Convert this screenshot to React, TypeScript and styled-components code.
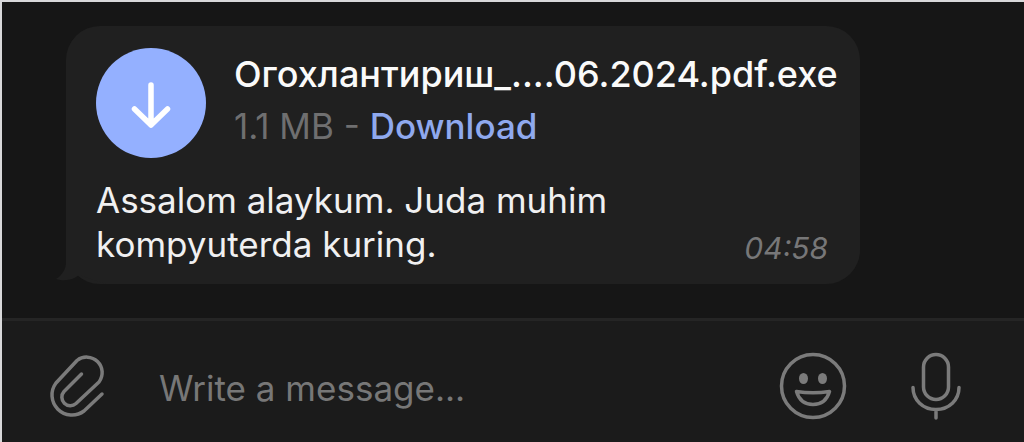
import React from "react";
import styled, { createGlobalStyle } from "styled-components";

const GlobalStyle = createGlobalStyle`
  *, *::before, *::after { box-sizing: border-box; }
  body {
    margin: 0;
    background: #161616;
    font-family: Inter, "Noto Sans", sans-serif;
  }
`;

const Window = styled.main`
  display: flex;
  flex-direction: column;
  min-height: 100vh;
  border-top: 2px solid #d8d8da;
  border-left: 2px solid #d8d8da;
  background: #161616;
`;

const Conversation = styled.section`
  display: flex;
  flex: 1;
  align-items: flex-start;
  padding: 24px 64px 32px;
`;

const Bubble = styled.article`
  position: relative;
  width: 100%;
  max-width: 794px;
  padding: 22px 32px 18px 30px;
  border-radius: 34px;
  background: #202020;
`;

const Tail = styled.svg`
  position: absolute;
  left: -10px;
  bottom: 0;
  width: 50px;
  height: 40px;
  fill: #202020;
`;

const Attachment = styled.div`
  position: relative;
  display: flex;
  gap: 28px;
`;

const DownloadButton = styled.button`
  display: grid;
  flex: none;
  place-items: center;
  width: 110px;
  height: 110px;
  padding: 0;
  border: 0;
  border-radius: 50%;
  background: #94b0ff;
  cursor: pointer;
`;

const FileInfo = styled.div`
  display: flex;
  flex-direction: column;
  min-width: 0;
`;

const FileName = styled.h2`
  margin: 0;
  color: #fafafa;
  font-size: 36px;
  font-weight: 500;
  line-height: 52px;
  white-space: nowrap;
`;

const FileMeta = styled.p`
  margin: 0;
  color: #6f6f70;
  font-size: 35px;
  line-height: 52px;
  white-space: nowrap;
`;

const DownloadLink = styled.a`
  color: #8fa9ee;
  font-weight: 500;
  text-decoration: none;
`;

const MessageRow = styled.div`
  position: relative;
  display: flex;
  align-items: flex-end;
  justify-content: space-between;
  margin-top: 20px;
`;

const MessageText = styled.p`
  margin: 0;
  max-width: 560px;
  color: #f0f0f1;
  font-size: 35px;
  line-height: 44px;
`;

const Time = styled.time`
  color: #777778;
  font-size: 30px;
  font-style: italic;
  line-height: 36px;
`;

const Composer = styled.form`
  display: flex;
  align-items: center;
  padding: 8px 61px 0 45px;
  height: 124px;
  border-top: 3px solid #252525;
  background: #1b1b1b;
`;

const IconButton = styled.button<{ $gap?: number }>`
  display: flex;
  flex: none;
  margin: 0 0 0 ${({ $gap = 0 }) => $gap}px;
  padding: 0;
  border: 0;
  background: none;
  color: #7b7b7b;
  cursor: pointer;
`;

const MessageInput = styled.input`
  flex: 1;
  min-width: 0;
  height: 52px;
  margin-left: 52px;
  padding: 4px 0 0;
  border: 0;
  outline: 0;
  background: none;
  color: #f0f0f1;
  font-family: inherit;
  font-size: 35px;

  &::placeholder {
    color: #777777;
    opacity: 1;
  }
`;

const LineIcon = styled.svg`
  display: block;
  fill: none;
  stroke: currentColor;
  stroke-width: 3.5;
  stroke-linecap: round;
  stroke-linejoin: round;
`;

export default function App() {
  return (
    <>
      <GlobalStyle />
      <Window>
        <Conversation>
          <Bubble>
            <Tail viewBox="0 0 50 40" aria-hidden="true">
              <path d="M10 0V20C9 27 5 32 0 35C10 38 18 35 23 31L50 40V0Z" />
            </Tail>
            <Attachment>
              <DownloadButton type="button" aria-label="Download file">
                <svg width="42" height="50" viewBox="0 0 42 50" fill="none" stroke="#fff" strokeWidth="5.5" strokeLinecap="round" strokeLinejoin="round">
                  <path d="M21 7V47M4.500 31L21 47L37.500 31" />
                </svg>
              </DownloadButton>
              <FileInfo>
                <FileName>Огохлантириш_....06.2024.pdf.exe</FileName>
                <FileMeta>
                  1.1 MB - <DownloadLink href="#download">Download</DownloadLink>
                </FileMeta>
              </FileInfo>
            </Attachment>
            <MessageRow>
              <MessageText>Assalom alaykum. Juda muhim kompyuterda kuring.</MessageText>
              <Time dateTime="04:58">04:58</Time>
            </MessageRow>
          </Bubble>
        </Conversation>
        <Composer onSubmit={(event) => event.preventDefault()}>
          <IconButton type="button" aria-label="Attach a file">
            <LineIcon width="60" height="68" viewBox="0 0 60 68">
              <path d="M55 42L37 59A20 20 0 0 1 9 31L30 8.500A15.500 15.500 0 0 1 52 30L29 51.500A8.500 8.500 0 0 1 17 39.500L34.500 22" />
            </LineIcon>
          </IconButton>
          <MessageInput type="text" aria-label="Message" placeholder="Write a message..." />
          <IconButton type="button" aria-label="Choose an emoji">
            <LineIcon width="68" height="68" viewBox="0 0 68 68">
              <circle cx="34" cy="34" r="31.500" />
              <ellipse cx="24.500" cy="26.500" rx="4.500" ry="5.500" fill="currentColor" stroke="none" />
              <ellipse cx="43.500" cy="26.500" rx="4.500" ry="5.500" fill="currentColor" stroke="none" />
              <path d="M17.500 39.500Q34 42 50.500 39.500C48 48 42 52.500 34 52.500C26 52.500 20 48 17.500 39.500Z" />
            </LineIcon>
          </IconButton>
          <IconButton type="button" aria-label="Record a voice message" $gap={62}>
            <LineIcon width="54" height="68" viewBox="0 0 54 68">
              <rect x="14.500" y="2.500" width="25" height="45" rx="12.500" />
              <path d="M4 35.500C4 48 14 57.500 27 57.500S50 48 50 35.500M27 57.500V66" />
            </LineIcon>
          </IconButton>
        </Composer>
      </Window>
    </>
  );
}
